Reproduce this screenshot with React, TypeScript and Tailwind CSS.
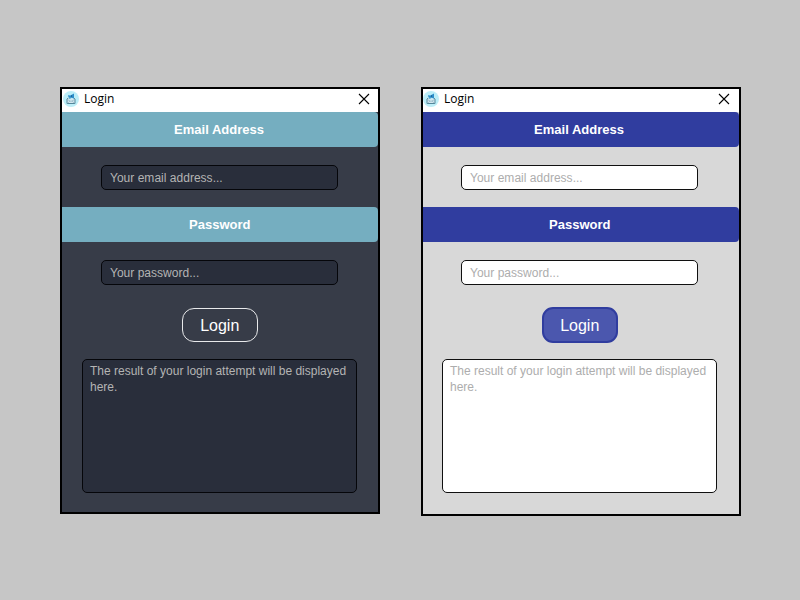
import React from "react";

type Theme = {
  frame: string;
  shell: string;
  header: string;
  field: string;
  button: string;
};

const dark: Theme = {
  frame: "h-[427px]",
  shell: "bg-[#373c48]",
  header: "bg-[#75aec0]",
  field: "border-[#05060a] bg-[#292e3b] text-[#b4b4b4]",
  button: "ml-[2px] h-[34px] w-[76px] mt-[23px] mb-[17px] border border-[#e8e9eb] bg-[#373c48] rounded-[12px]",
};

const light: Theme = {
  frame: "h-[429px]",
  shell: "bg-[#d8d8d8]",
  header: "bg-[#303d9f]",
  field: "border-[#101010] bg-white text-[#adadad]",
  button: "ml-[2px] h-[36px] w-[76px] mt-[22px] mb-[16px] border-2 border-[#303d9f] bg-[#4b57ae] rounded-[11px]",
};

function MailIcon() {
  return (
    <svg width="16" height="16" viewBox="0 0 16 16" fill="none">
      <circle cx="8" cy="8" r="8" fill="#bdeef8" />
      <path d="M4 7.5h8v5H4z" fill="#d3e7ef" />
      <path d="M5.5 6.9 4 8v4.5h8V8l-1.5-1.1" stroke="#54879b" />
      <path d="M4.4 8.6 8 10.4l3.6-1.8M4.6 12.2 7 10M11.4 12.2 9 10" stroke="#8fb5c3" strokeWidth=".7" />
      <path d="m5 4.2 2.3.3L11 2.6v4.8L7.8 6.6l-.4 1.2-1.1-.1-.2-1.6L5 5.6z" fill="#2f8fcb" />
      <path d="M8.6 4.2v2" stroke="#1b5889" strokeWidth=".8" />
    </svg>
  );
}

function Header({ text, theme, inset }: { text: string; theme: Theme; inset: string }) {
  return (
    <div className={`flex h-[35px] w-full shrink-0 items-center justify-center rounded-r-[4px] text-[13px] font-bold text-white ${inset} ${theme.header}`}>
      {text}
    </div>
  );
}

function LoginWindow({ theme, inset, passwordInset, shift }: { theme: Theme; inset: string; passwordInset: string; shift: string }) {
  const field = `flex h-[25px] w-[237px] shrink-0 items-center rounded-[5px] border pl-[8.5px] text-[12px] tracking-[0.02px] ${theme.field}`;
  return (
    <section className={`flex w-[320px] shrink-0 flex-col border-2 border-black ${theme.frame} ${theme.shell}`}>
      <div className={`flex h-[23px] shrink-0 items-center bg-white pb-[3px] ${shift}`}>
        <MailIcon />
        <span className="ml-[5px] font-['Open_Sans','Noto_Sans',sans-serif] text-[12px] leading-4 text-black">Login</span>
        <svg className="mr-[8px] ml-auto" width="12" height="12" viewBox="0 0 12 12" stroke="#000" strokeWidth="1.1">
          <path d="m1 1 10 10M11 1 1 11" />
        </svg>
      </div>
      <Header text="Email Address" theme={theme} inset={inset} />
      <div className={`flex flex-col items-center ${inset}`}>
        <div className={`mt-[18px] mb-[17px] ${field}`}>Your email address...</div>
      </div>
      <Header text="Password" theme={theme} inset={passwordInset} />
      <div className={`flex flex-col items-center ${inset}`}>
        <div className={`mt-[18px] ${field}`}>Your password...</div>
        <button className={`flex items-center justify-center pt-[2px] pr-[0.5px] text-[16px] leading-none text-white ${theme.button}`}>Login</button>
        <div className={`h-[134px] w-[275px] rounded-[5px] border pr-[6px] pl-[7.5px] pt-[3px] text-[12px] leading-4 ${theme.field}`}>
          The result of your login attempt will be displayed here.
        </div>
      </div>
    </section>
  );
}

export default function App() {
  return (
    <main className="flex h-[600px] w-[800px] items-start gap-[41px] bg-[#c6c6c6] pt-[87px] pl-[60px] font-['Liberation_Sans',Arial,sans-serif]">
      <LoginWindow theme={dark} inset="pr-[2px]" passwordInset="pr-[0.5px]" shift="pl-[1px]" />
      <LoginWindow theme={light} inset="pr-[4px]" passwordInset="pr-[2.5px]" shift="pr-[1px]" />
    </main>
  );
}
